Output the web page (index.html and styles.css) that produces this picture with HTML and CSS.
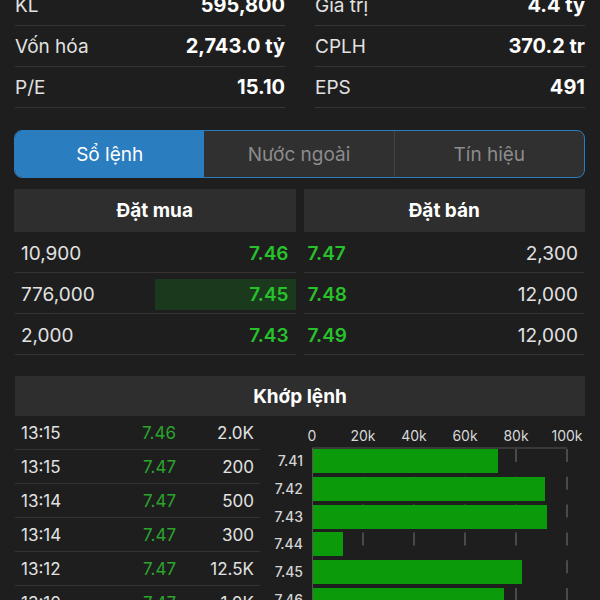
FILE: index.html
```html
<!DOCTYPE html>
<html lang="vi">

<head>
    <meta charset="UTF-8">
    <meta name="viewport" content="width=device-width, initial-scale=1.0">
    <title>Sổ lệnh</title>
    <link rel="stylesheet" href="styles.css">
</head>

<body>
    <div class="screen">
        <div class="stats">
            <div class="stat-col">
                <div class="stat-row"><span>KL</span><strong>595,800</strong></div>
                <div class="stat-row"><span>Vốn hóa</span><strong>2,743.0 tỷ</strong></div>
                <div class="stat-row"><span>P/E</span><strong>15.10</strong></div>
            </div>
            <div class="stat-col">
                <div class="stat-row"><span>Giá trị</span><strong>4.4 tỷ</strong></div>
                <div class="stat-row"><span>CPLH</span><strong>370.2 tr</strong></div>
                <div class="stat-row"><span>EPS</span><strong>491</strong></div>
            </div>
        </div>

        <div class="tabs">
            <div class="tab active">Sổ lệnh</div>
            <div class="tab">Nước ngoài</div>
            <div class="tab">Tín hiệu</div>
        </div>

        <div class="book">
            <div class="book-side buy">
                <div class="book-head">Đặt mua</div>
                <div class="book-row"><span>10,900</span><span class="up">7.46</span></div>
                <div class="book-row"><span class="depth" style="width: 50%"></span><span>776,000</span><span class="up">7.45</span></div>
                <div class="book-row"><span>2,000</span><span class="up">7.43</span></div>
            </div>
            <div class="book-side sell">
                <div class="book-head">Đặt bán</div>
                <div class="book-row"><span class="up">7.47</span><span>2,300</span></div>
                <div class="book-row"><span class="up">7.48</span><span>12,000</span></div>
                <div class="book-row"><span class="up">7.49</span><span>12,000</span></div>
            </div>
        </div>

        <div class="match-head">Khớp lệnh</div>
        <div class="match">
            <div class="trades">
                <div class="trade"><span>13:15</span><span class="up">7.46</span><span>2.0K</span></div>
                <div class="trade"><span>13:15</span><span class="up">7.47</span><span>200</span></div>
                <div class="trade"><span>13:14</span><span class="up">7.47</span><span>500</span></div>
                <div class="trade"><span>13:14</span><span class="up">7.47</span><span>300</span></div>
                <div class="trade"><span>13:12</span><span class="up">7.47</span><span>12.5K</span></div>
                <div class="trade"><span>13:10</span><span class="up">7.47</span><span>1.0K</span></div>
            </div>

            <!-- khối lượng theo giá -->
            <svg class="chart" width="325" height="200" viewBox="0 0 325 200">
                <g class="axis-label">
                    <text x="53" y="25">0</text>
                    <text x="104" y="25">20k</text>
                    <text x="155" y="25">40k</text>
                    <text x="206" y="25">60k</text>
                    <text x="257" y="25">80k</text>
                    <text x="308" y="25">100k</text>
                </g>
                <g class="grid">
                    <line x1="104" y1="33" x2="104" y2="200" />
                    <line x1="155" y1="33" x2="155" y2="200" />
                    <line x1="206" y1="33" x2="206" y2="200" />
                    <line x1="257" y1="33" x2="257" y2="200" />
                    <line x1="308" y1="33" x2="308" y2="200" />
                </g>
                <g class="bars">
                    <rect x="54" y="33" width="185" height="24" />
                    <rect x="54" y="61" width="232" height="24" />
                    <rect x="54" y="89" width="234" height="24" />
                    <rect x="54" y="116" width="30" height="24" />
                    <rect x="54" y="144" width="209" height="24" />
                    <rect x="54" y="172" width="191" height="24" />
                </g>
                <line class="axis" x1="53" y1="32" x2="308" y2="32" />
                <line class="axis" x1="53.5" y1="32" x2="53.5" y2="200" />
                <g class="price-label">
                    <text x="44" y="50">7.41</text>
                    <text x="44" y="78">7.42</text>
                    <text x="44" y="106">7.43</text>
                    <text x="44" y="133">7.44</text>
                    <text x="44" y="161">7.45</text>
                    <text x="44" y="189">7.46</text>
                </g>
            </svg>
        </div>
    </div>
</body>

</html>
```

FILE: styles.css
```css
:root {
    --bg-color: #1e1e1e;
    --cell-bg: #2e2e2e;
    --tab-bg: #303030;
    --accent: #2a7dbf;
    --line-color: #343434;
    --text-primary: #ffffff;
    --text-secondary: #e2e2e2;
    --text-muted: #8c8c8c;
    --up-color: #27c22b;
    --bar-color: #0a9a0a;
}

body {
    margin: 0;
    background-color: var(--bg-color);
    color: var(--text-primary);
    font-family: 'Inter', 'Noto Sans', sans-serif;
    overflow: hidden;
}

.screen {
    padding: 0 15px 0 14px;
    margin-top: -15px;
}

.up {
    color: var(--up-color);
}

/* thống kê */
.stats {
    display: grid;
    grid-template-columns: 1fr 1fr;
    gap: 30px;
    padding-left: 1px;
}

.stat-row {
    height: 40px;
    display: flex;
    align-items: center;
    justify-content: space-between;
    border-bottom: 1px solid var(--line-color);
    font-size: 19px;
}

.stat-row span {
    color: var(--text-secondary);
}

.stat-row strong {
    font-size: 20px;
    font-weight: 700;
}

/* tabs */
.tabs {
    display: flex;
    height: 46px;
    margin-top: 22px;
    border: 1px solid var(--accent);
    border-radius: 8px;
    overflow: hidden;
    background-color: var(--tab-bg);
}

.tab {
    flex: 1;
    display: flex;
    align-items: center;
    justify-content: center;
    font-size: 19px;
    color: var(--text-muted);
    border-left: 1px solid #444;
}

.tab:first-child {
    border-left: none;
}

.tab.active {
    background-color: var(--accent);
    color: var(--text-primary);
}

.tab.active + .tab {
    border-left: none;
}

/* sổ lệnh */
.book {
    display: grid;
    grid-template-columns: 1fr 1fr;
    gap: 8px;
    margin-top: 11px;
}

.book-head {
    height: 43px;
    display: flex;
    align-items: center;
    justify-content: center;
    background-color: var(--cell-bg);
    font-size: 19px;
    font-weight: 700;
}

.book-row {
    position: relative;
    height: 40px;
    box-sizing: border-box;
    height: 41px;
    padding-top: 3px !important;
    display: flex;
    align-items: center;
    justify-content: space-between;
    border-bottom: 1px solid var(--line-color);
    font-size: 19px;
    color: var(--text-secondary);
}

.book-row span {
    position: relative;
}

.book-row .up {
    font-weight: 600;
}

.buy .book-row {
    padding: 0 7px 0 6px;
    margin-left: 1px;
}

.sell .book-row {
    padding: 0 6px 0 4px;
    margin-right: 1px;
}

.depth {
    position: absolute !important;
    right: 0;
    top: 6px;
    bottom: 3px;
    background-color: #1b3a1d;
}

/* khớp lệnh */
.match-head {
    height: 40px;
    margin: 21px 0 0 1px;
    display: flex;
    align-items: center;
    justify-content: center;
    background-color: var(--cell-bg);
    font-size: 19px;
    font-weight: 700;
}

.match {
    display: flex;
}

.trades {
    width: 245px;
    margin-left: 1px;
}

.trade {
    height: 33px;
    display: grid;
    grid-template-columns: 1fr 56px 78px;
    align-items: center;
    padding: 0 6px 0 6px;
    border-bottom: 1px solid var(--line-color);
    font-size: 17px;
    color: var(--text-secondary);
}

.trade span:nth-child(2),
.trade span:nth-child(3) {
    text-align: right;
}

.trade .up {
    color: #2aa52c;
}

.chart {
    display: block;
    margin-left: -1px;
}

.axis-label text {
    fill: #d8d8d8;
    font-size: 14px;
    text-anchor: middle;
}

.price-label text {
    fill: #d4d4d4;
    font-size: 14px;
    font-weight: 500;
    text-anchor: end;
}

.grid line {
    stroke: #5a5a5a;
    stroke-width: 1.5;
    stroke-dasharray: 13 14.8;
}

.bars rect {
    fill: var(--bar-color);
}

.axis {
    stroke: #555;
    stroke-width: 1;
}
```
